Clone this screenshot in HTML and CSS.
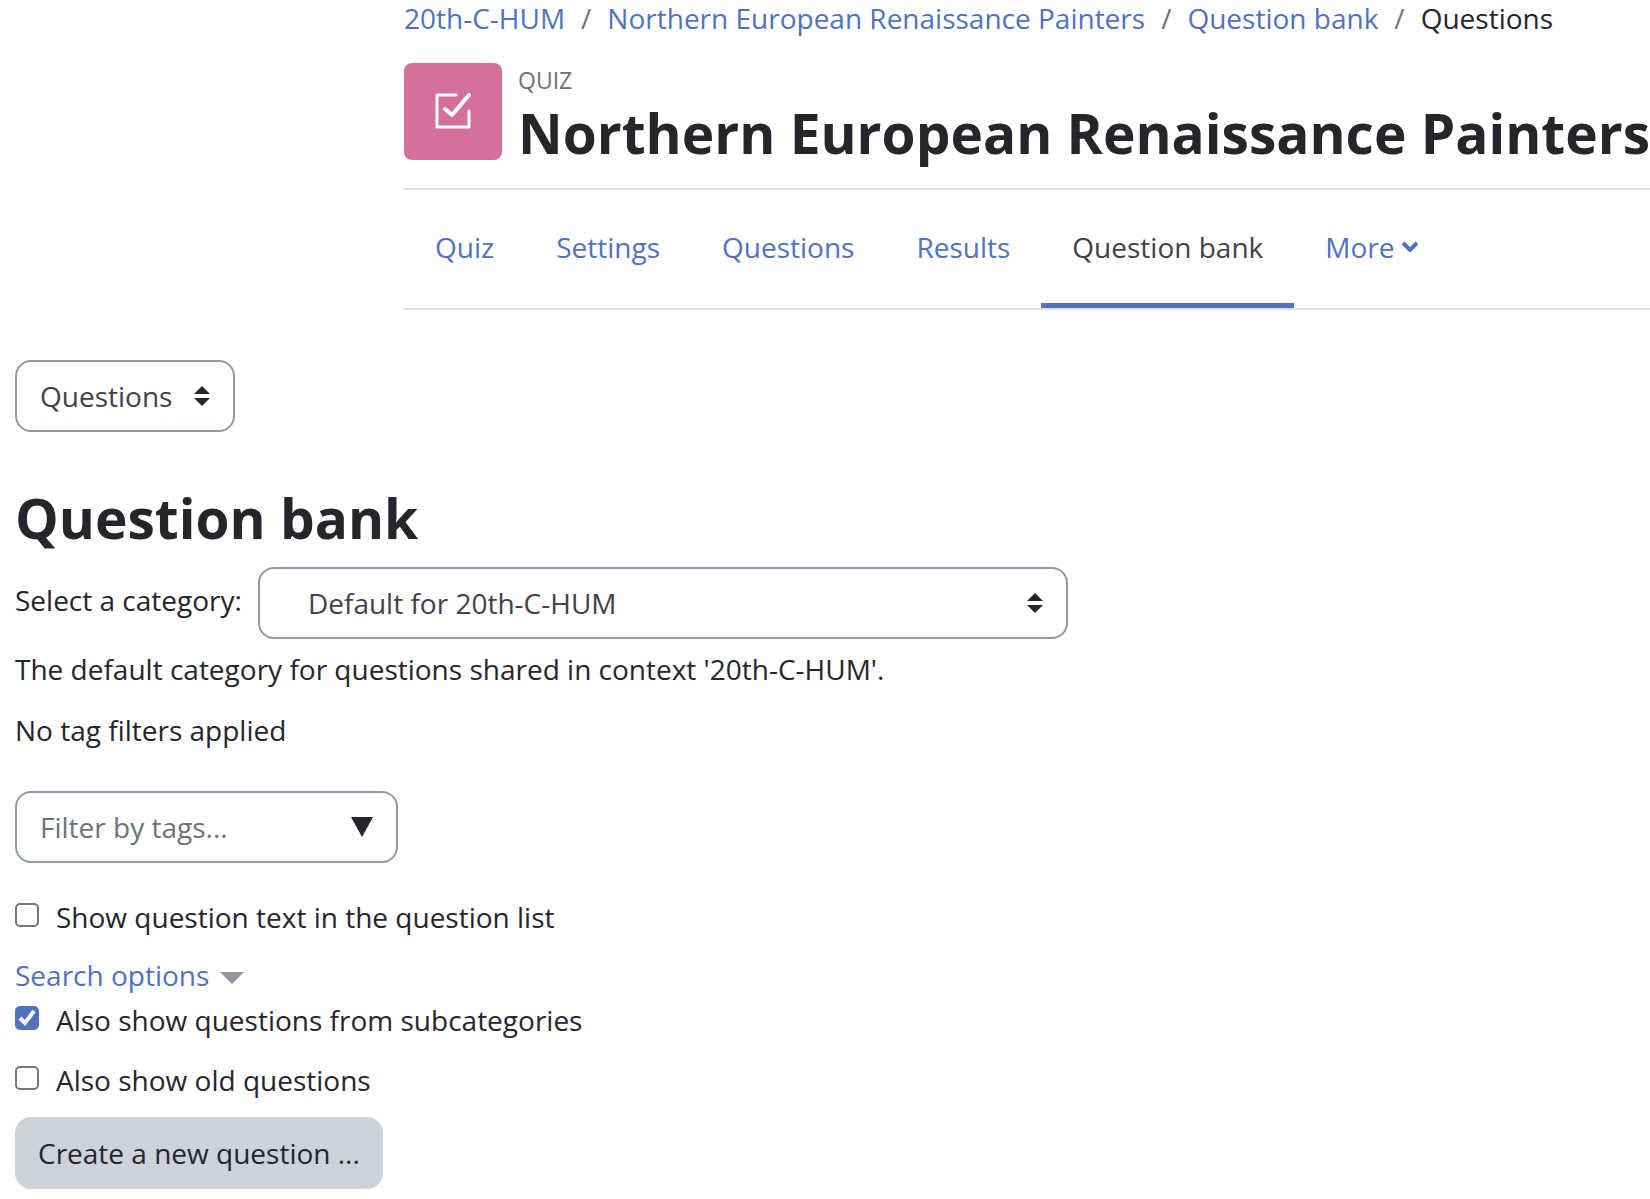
FILE: index.html
```html
<!DOCTYPE html>
<html lang="en">
<head>
<meta charset="utf-8">
<meta name="viewport" content="width=device-width, initial-scale=1">
<title>Question bank</title>
<link rel="stylesheet" href="styles.css">
</head>
<body>
<header class="page-header">
  <nav aria-label="Breadcrumb">
    <ol class="breadcrumb">
      <li><a href="#">20th-C-HUM</a></li>
      <li><a href="#">Northern European Renaissance Painters</a></li>
      <li><a href="#">Question bank</a></li>
      <li aria-current="page">Questions</li>
    </ol>
  </nav>
  <div class="activity">
    <div class="activity-icon">
      <svg viewBox="0 0 36 36" width="36" height="36" fill="none" stroke="#fff" stroke-width="3" stroke-linecap="round" stroke-linejoin="round" aria-hidden="true">
        <path d="M21 2H2v32h32V18"/>
        <path d="M10 16l7 6L34 2" stroke-width="4"/>
      </svg>
    </div>
    <div class="activity-title">
      <p class="activity-type">QUIZ</p>
      <h1>Northern European Renaissance Painters</h1>
    </div>
  </div>
  <nav class="tabs" aria-label="Quiz">
    <a class="tab" href="#">Quiz</a>
    <a class="tab" href="#">Settings</a>
    <a class="tab" href="#">Questions</a>
    <a class="tab" href="#">Results</a>
    <a class="tab tab-active" href="#" aria-current="page">Question bank</a>
    <a class="tab" href="#">More
      <svg viewBox="0 0 16 11" width="16" height="11" fill="none" stroke="currentColor" stroke-width="4" aria-hidden="true"><path d="M1 2l7 7 7-7"/></svg>
    </a>
  </nav>
</header>
<main class="content">
  <select class="control view-select" aria-label="Question bank view">
    <option>Questions</option>
  </select>
  <h2>Question bank</h2>
  <div class="category">
    <label for="category">Select a category:</label>
    <select class="control category-select" id="category">
      <option>Default for 20th-C-HUM</option>
    </select>
  </div>
  <p class="description">The default category for questions shared in context '20th-C-HUM'.</p>
  <p class="filters">No tag filters applied</p>
  <div class="tag-filter">
    <input class="control tag-input" type="text" placeholder="Filter by tags..." aria-label="Filter by tags">
    <button class="tag-toggle" type="button" aria-label="Show tags">
      <svg viewBox="0 0 22 20" width="22" height="20" fill="currentColor" aria-hidden="true"><path d="M0 0h22L11 20z"/></svg>
    </button>
  </div>
  <div class="check">
    <input type="checkbox" id="show-text">
    <label for="show-text">Show question text in the question list</label>
  </div>
  <a class="search-options" href="#">Search options
    <svg viewBox="0 0 24 12" width="24" height="12" fill="#8f959e" aria-hidden="true"><path d="M0 0h24L12 12z"/></svg>
  </a>
  <div class="check">
    <input type="checkbox" id="subcategories" checked>
    <label for="subcategories">Also show questions from subcategories</label>
  </div>
  <div class="check">
    <input type="checkbox" id="old">
    <label for="old">Also show old questions</label>
  </div>
  <button class="create" type="button">Create a new question ...</button>
</main>
</body>
</html>
```
FILE: styles.css
```css
* {
  box-sizing: border-box;
}

body {
  margin: 0;
  background: #fff;
  color: #26252c;
  font: 28px/44px "Open Sans", "Noto Sans", sans-serif;
}

h1, h2, p, ol {
  margin: 0;
}

a {
  color: #4f73bf;
  text-decoration: none;
}

.page-header {
  margin-left: 404px;
}

.breadcrumb {
  display: flex;
  padding: 0;
  margin-top: -4px;
  list-style: none;
  white-space: nowrap;
}

.breadcrumb li + li::before {
  content: "/";
  padding: 0 16px;
  color: #6a737b;
}

.activity {
  display: flex;
  gap: 16px;
  height: 150px;
  padding-top: 23px;
  border-bottom: 2px solid #dfe1e5;
}

.activity-icon {
  display: flex;
  flex: none;
  align-items: center;
  justify-content: center;
  width: 98px;
  height: 97px;
  padding-bottom: 2px;
  border-radius: 8px;
  background: #d5709b;
}

.activity-type {
  color: #6a737b;
  font-size: 23px;
  line-height: 34px;
}

h1, h2 {
  font-size: 55px;
  line-height: 72px;
  font-weight: 700;
  white-space: nowrap;
}

.tabs {
  display: flex;
  height: 120px;
  border-bottom: 2px solid #dfe1e5;
}

.tab {
  display: flex;
  align-items: center;
  gap: 8px;
  padding: 0 31px;
  border-bottom: 5px solid transparent;
  white-space: nowrap;
}

.tab-active {
  border-color: #4f73bf;
  color: #42414a;
}

.content {
  display: flex;
  flex-direction: column;
  align-items: flex-start;
  padding: 50px 15px 9px;
}

.control {
  height: 72px;
  padding: 0 23px;
  border: 2px solid #8f99ad;
  border-radius: 16px;
  background-color: #fff;
  color: #42414a;
  font: inherit;
}

select.control {
  appearance: none;
  background-image: url("data:image/svg+xml,%3Csvg xmlns='http://www.w3.org/2000/svg' viewBox='0 0 16 20'%3E%3Cpath fill='%2326252c' d='M0 8L8 0l8 8zM0 12h16l-8 8z'/%3E%3C/svg%3E");
  background-repeat: no-repeat;
  background-position: right 23px center;
  background-size: 16px 20px;
}

.view-select {
  width: 220px;
}

h2 {
  margin-top: 50px;
}

.category {
  display: flex;
  gap: 16px;
  max-width: 100%;
  margin-top: 13px;
}

.category label {
  padding-top: 11px;
  white-space: nowrap;
}

.category .category-select {
  width: 810px;
  padding-left: 48px;
}

.description {
  margin-top: 8px;
}

.filters {
  margin-top: 17px;
}

.tag-filter {
  display: flex;
  align-items: center;
  margin-top: 39px;
}

.tag-input {
  width: 383px;
  padding-right: 72px;
}

.tag-input::placeholder {
  color: #6a737b;
  opacity: 1;
}

.tag-toggle {
  display: flex;
  margin-left: -47px;
  padding: 0;
  border: 0;
  background: none;
  color: #26252c;
}

.check {
  display: flex;
  align-items: flex-start;
  gap: 17px;
  margin-bottom: 16px;
}

.check input {
  appearance: none;
  width: 24px;
  height: 24px;
  margin: 8px 0 0;
  border: 2px solid #767680;
  border-radius: 5px;
  background: #fff;
}

.check input:checked {
  border-color: #4f73bf;
  background: #4f73bf url("data:image/svg+xml,%3Csvg xmlns='http://www.w3.org/2000/svg' viewBox='0 0 20 20'%3E%3Cpath fill='none' stroke='%23fff' stroke-width='4' d='M3 10l5 5L17 3'/%3E%3C/svg%3E") center / 20px 20px no-repeat;
}

.tag-filter + .check {
  margin-top: 32px;
  margin-bottom: 14px;
}

.search-options {
  display: flex;
  align-items: center;
  gap: 11px;
  margin-bottom: 1px;
}

.search-options svg {
  margin-top: 6px;
}

.create {
  height: 72px;
  margin-top: -1px;
  padding: 0 23px;
  border: 0;
  border-radius: 16px;
  background: #ced2da;
  color: #26252c;
  font: inherit;
}
```
